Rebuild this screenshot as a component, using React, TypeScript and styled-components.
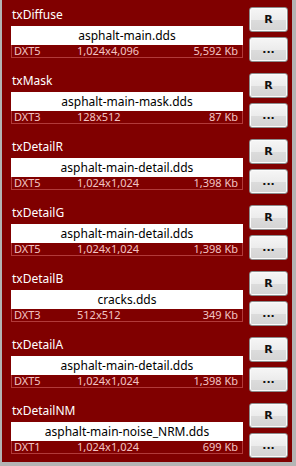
import styled, { createGlobalStyle } from "styled-components";

const GlobalStyle = createGlobalStyle`
	html, body {
		margin: 0;
		padding: 0;
		background: #b4b4b4;
	}
	body {
		font-family: "Noto Sans", "Open Sans", "DejaVu Sans", sans-serif;
	}
`;

const Panel = styled.div`
	width: 290px;
	margin-left: 2px;
	background: #800000;
	display: flex;
	flex-direction: column;
`;

const Slot = styled.div`
	height: 66px;
	box-sizing: border-box;
	display: flex;
	padding: 5px 0 0 9px;
	gap: 6px;
`;

const Body = styled.div`
	width: 232px;
	display: flex;
	flex-direction: column;
`;

const Label = styled.div`
	color: #fff;
	font-size: 12px;
	line-height: 20px;
	height: 21px;
	padding-left: 1px;
`;

const FileName = styled.div`
	background: #fff;
	color: #000;
	height: 19px;
	font-size: 12px;
	line-height: 19px;
	text-align: center;
	white-space: nowrap;
	overflow: hidden;
`;

const Info = styled.div`
	height: 13px;
	box-sizing: border-box;
	border: 1px solid #b23a3a;
	border-top: none;
	display: grid;
	grid-template-columns: 63px 1fr auto;
	padding: 0 4px 0 2px;
	color: #f2c4c4;
	font-size: 11px;
	line-height: 12px;
`;

const Size = styled.span`
	text-align: right;
`;

const Buttons = styled.div`
	display: flex;
	flex-direction: column;
	gap: 5px;
	padding-top: 2px;
`;

const Button = styled.button`
	width: 39px;
	height: 25px;
	padding: 0;
	border: 1px solid #8c8c8c;
	border-radius: 3px;
	background: linear-gradient(#f6f6f6 0%, #ececec 50%, #dcdcdc 51%, #d4d4d4 100%);
	color: #111;
	font-family: "DejaVu Sans", sans-serif;
	font-weight: bold;
	font-size: 11px;
	line-height: 23px;
	box-shadow: inset 0 0 0 1px #fbfbfb;
`;

type Texture = {
	name: string;
	file: string;
	format: string;
	dims: string;
	size: string;
};

const textures: Texture[] = [
	{ name: "txDiffuse", file: "asphalt-main.dds", format: "DXT5", dims: "1,024x4,096", size: "5,592 Kb" },
	{ name: "txMask", file: "asphalt-main-mask.dds", format: "DXT3", dims: "128x512", size: "87 Kb" },
	{ name: "txDetailR", file: "asphalt-main-detail.dds", format: "DXT5", dims: "1,024x1,024", size: "1,398 Kb" },
	{ name: "txDetailG", file: "asphalt-main-detail.dds", format: "DXT5", dims: "1,024x1,024", size: "1,398 Kb" },
	{ name: "txDetailB", file: "cracks.dds", format: "DXT3", dims: "512x512", size: "349 Kb" },
	{ name: "txDetailA", file: "asphalt-main-detail.dds", format: "DXT5", dims: "1,024x1,024", size: "1,398 Kb" },
	{ name: "txDetailNM", file: "asphalt-main-noise_NRM.dds", format: "DXT1", dims: "1,024x1,024", size: "699 Kb" },
];

export default function App() {
	return (
		<>
			<GlobalStyle />
			<Panel>
				{textures.map((t) => (
					<Slot key={t.name}>
						<Body>
							<Label>{t.name}</Label>
							<FileName>{t.file}</FileName>
							<Info>
								<span>{t.format}</span>
								<span>{t.dims}</span>
								<Size>{t.size}</Size>
							</Info>
						</Body>
						<Buttons>
							<Button>R</Button>
							<Button>...</Button>
						</Buttons>
					</Slot>
				))}
			</Panel>
		</>
	);
}
